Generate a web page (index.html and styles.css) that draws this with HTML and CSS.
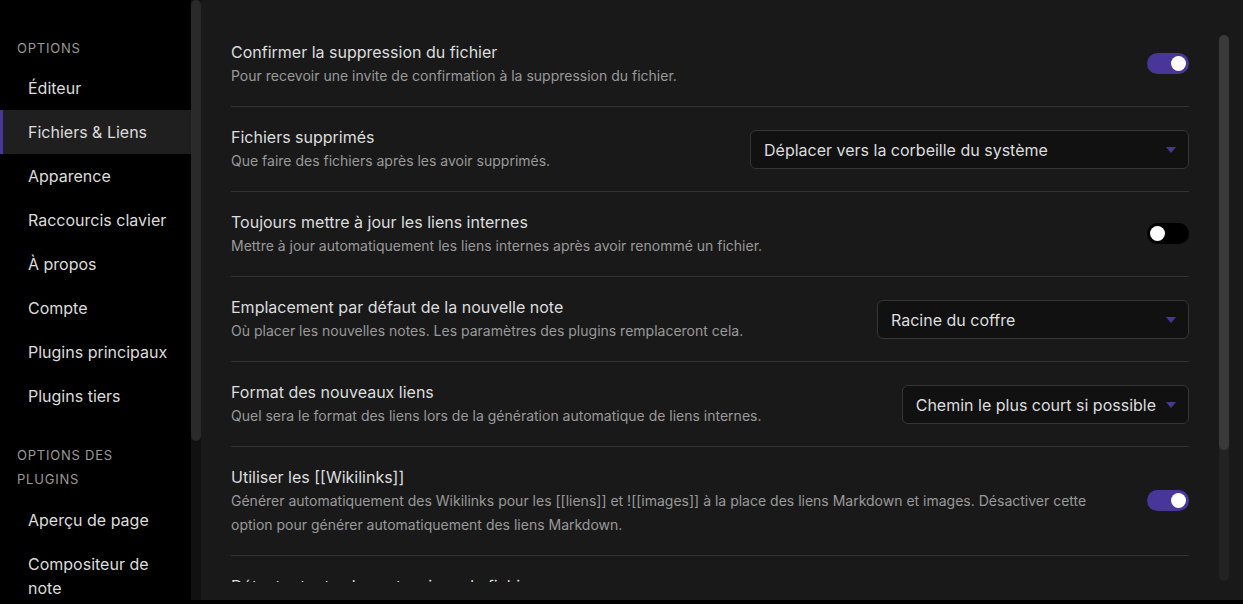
FILE: index.html
```html
<!DOCTYPE html>
<html lang="fr">
<head>
<meta charset="utf-8">
<title>Options</title>
<link rel="stylesheet" href="styles.css">
</head>
<body>
<div class="app">
  <nav class="sidebar">
    <div class="side-head first">Options</div>
    <div class="side-item">Éditeur</div>
    <div class="side-item active">Fichiers &amp; Liens</div>
    <div class="side-item">Apparence</div>
    <div class="side-item">Raccourcis clavier</div>
    <div class="side-item">À propos</div>
    <div class="side-item">Compte</div>
    <div class="side-item">Plugins principaux</div>
    <div class="side-item">Plugins tiers</div>
    <div class="side-head">Options des plugins</div>
    <div class="side-item">Aperçu de page</div>
    <div class="side-item">Compositeur de note</div>
  </nav>
  <div class="side-scroll"><div class="side-thumb"></div></div>
  <main class="main">
    <div class="settings">
      <div class="setting">
        <div class="info">
          <div class="title">Confirmer la suppression du fichier</div>
          <div class="desc">Pour recevoir une invite de confirmation à la suppression du fichier.</div>
        </div>
        <div class="toggle on"><span class="knob"></span></div>
      </div>
      <div class="setting">
        <div class="info">
          <div class="title">Fichiers supprimés</div>
          <div class="desc">Que faire des fichiers après les avoir supprimés.</div>
        </div>
        <div class="dropdown dd-wide">Déplacer vers la corbeille du système</div>
      </div>
      <div class="setting">
        <div class="info">
          <div class="title">Toujours mettre à jour les liens internes</div>
          <div class="desc">Mettre à jour automatiquement les liens internes après avoir renommé un fichier.</div>
        </div>
        <div class="toggle"><span class="knob"></span></div>
      </div>
      <div class="setting">
        <div class="info">
          <div class="title">Emplacement par défaut de la nouvelle note</div>
          <div class="desc">Où placer les nouvelles notes. Les paramètres des plugins remplaceront cela.</div>
        </div>
        <div class="dropdown dd-mid">Racine du coffre</div>
      </div>
      <div class="setting">
        <div class="info">
          <div class="title">Format des nouveaux liens</div>
          <div class="desc">Quel sera le format des liens lors de la génération automatique de liens internes.</div>
        </div>
        <div class="dropdown">Chemin le plus court si possible</div>
      </div>
      <div class="setting">
        <div class="info">
          <div class="title">Utiliser les [[Wikilinks]]</div>
          <div class="desc">Générer automatiquement des Wikilinks pour les [[liens]] et ![[images]] à la place des liens Markdown et images. Désactiver cette option pour générer automatiquement des liens Markdown.</div>
        </div>
        <div class="toggle on"><span class="knob"></span></div>
      </div>
      <div class="setting">
        <div class="info">
          <div class="title">Détecter toutes les extensions de fichier</div>
          <div class="desc">Afficher les fichiers avec des extensions différentes.</div>
        </div>
        <div class="toggle"><span class="knob"></span></div>
      </div>
    </div>
    <div class="vscroll"><div class="vthumb"></div></div>
  </main>
</div>
</body>
</html>
```
FILE: styles.css
```css
* { box-sizing: border-box; }
html, body { margin: 0; padding: 0; background: #000; }
body {
  font-family: Inter, "Noto Sans", "DejaVu Sans", sans-serif;
  color: #dcddde;
  overflow: hidden;
}
.app {
  display: flex;
  height: 600px;
  overflow: hidden;
}
.sidebar {
  width: 191px;
  flex: none;
  background: #000;
  overflow: hidden;
}
.side-head {
  margin: 25px 0 7px;
  padding: 0 17px;
  font-size: 13px;
  line-height: 24px;
  letter-spacing: 0.06em;
  text-transform: uppercase;
  color: #9a9a9a;
}
.side-head.first { margin-top: 36px; margin-bottom: 6px; }
.side-item {
  padding: 10px 18px 10px 25px;
  font-size: 16px;
  line-height: 24px;
  color: #dcdcdc;
  border-left: 3px solid transparent;
}
.side-item.active {
  background: #1f1f1f;
  border-left-color: #483699;
}
.side-scroll {
  width: 10px;
  flex: none;
  background: #111;
}
.side-thumb {
  height: 441px;
  background: #2a2a2a;
  border-radius: 5px;
}
.main {
  flex: 1;
  display: flex;
  background: #191919;
  padding-left: 30px;
}
.settings {
  flex: 1;
  height: 582px;
  overflow: hidden;
  padding-top: 22px;
}
.setting {
  display: flex;
  align-items: center;
  padding: 19px 0 18px;
  border-top: 1px solid #333;
}
.setting:first-child { border-top: none; }
.info {
  flex: 1 1 auto;
  margin-right: 20px;
}
.title {
  font-size: 16px;
  line-height: 22px;
  color: #dcddde;
}
.desc {
  margin-top: 1px;
  font-size: 14px;
  line-height: 24px;
  color: #999;
}
.toggle {
  flex: none;
  width: 42px;
  height: 21px;
  margin-top: -2px;
  border-radius: 11px;
  background: #000;
  display: flex;
  align-items: center;
  padding: 0 3px;
}
.toggle.on {
  background: #483699;
  justify-content: flex-end;
}
.knob {
  width: 15px;
  height: 15px;
  border-radius: 50%;
  background: #fff;
}
.dropdown {
  flex: none;
  position: relative;
  height: 39px;
  margin-top: -1px;
  line-height: 38px;
  padding: 0 32px 0 13px;
  background: #111;
  border: 1px solid #363636;
  border-radius: 6px;
  font-size: 16px;
  color: #dcddde;
  white-space: nowrap;
}
.dropdown::after {
  content: "";
  position: absolute;
  right: 12px;
  top: 16px;
  border-left: 5px solid transparent;
  border-right: 5px solid transparent;
  border-top: 6px solid #483699;
}
.dd-wide { width: 439px; }
.dd-mid { width: 312px; }
.vscroll {
  flex: none;
  width: 10px;
  height: 546px;
  margin: 35px 14px 0 30px;
  background: #232323;
  border-radius: 5px;
}
.vthumb {
  height: 415px;
  background: #3a3a3a;
  border-radius: 5px;
}
```
